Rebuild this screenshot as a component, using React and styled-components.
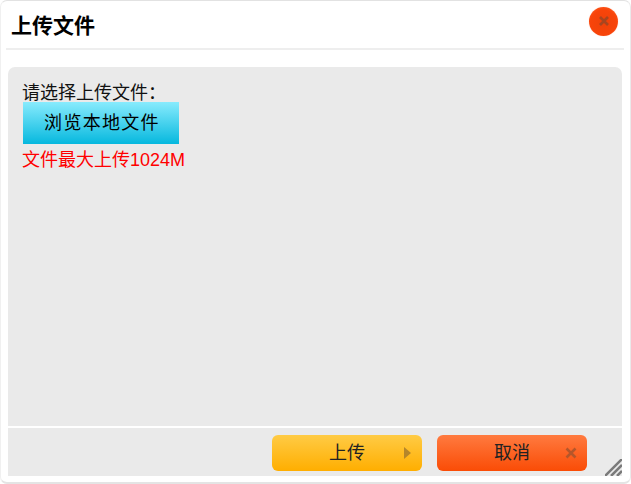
import styled, { createGlobalStyle } from 'styled-components';

const GlobalStyle = createGlobalStyle`
  html, body {
    margin: 0;
    padding: 0;
    background: #fff;
    overflow: hidden;
  }
  body {
    font-family: "Liberation Sans", "Noto Sans CJK SC", sans-serif;
  }
`;

const Dialog = styled.div`
  position: relative;
  box-sizing: border-box;
  width: 631px;
  height: 484px;
  padding: 0 8px 6px 7px;
  display: flex;
  flex-direction: column;
  background: #fff;
  border-top: 1px solid #e2e2e2;
  border-bottom: 2px solid #e4e4e4;
  border-right: 1px solid #eaeaea;
  border-left: 1px solid #f0f0f0;
  border-radius: 7px;
`;

const Header = styled.div`
  height: 47px;
  margin: 0 -2px;
  padding: 0 6px 0 5px;
  flex: none;
  display: flex;
  align-items: center;
  justify-content: space-between;
  border-bottom: 2px solid #eeeeee;
`;

const Title = styled.h1`
  margin: 3px 0 0;
  font-size: 21px;
  line-height: 24px;
  font-weight: bold;
  color: #000;
`;

const Close = styled.button`
  width: 29px;
  height: 29px;
  margin: -7px 0 0 0;
  padding: 0;
  border: none;
  border-radius: 50%;
  background: radial-gradient(circle at 50% 55%, #ee420a 0%, #f8440a 60%, #ff5a1e 85%, #ff8a5a 100%);
  box-shadow: 0 0 1px rgba(255, 90, 30, 0.4);
  display: flex;
  align-items: center;
  justify-content: center;
`;

const Panel = styled.div`
  flex: 1;
  margin-top: 17px;
  display: flex;
  flex-direction: column;
  background: #eaeaea;
  border-radius: 7px 7px 0 0;
`;

const Body = styled.div`
  flex: 1;
  padding: 14px 15px 0;
  font-size: 18px;
  line-height: 21px;
  color: #111;
`;

const Label = styled.div`
  height: 21px;
  margin-left: -1px;
  line-height: 25px;
`;

const Browse = styled.button`
  display: block;
  width: 156px;
  height: 42px;
  padding: 0 0 0 2px;
  border: none;
  background: linear-gradient(#88ebfd, #06b8de);
  color: #000;
  font: 18px/42px "Liberation Sans", "Noto Sans CJK SC", sans-serif;
  letter-spacing: 1.3px;
  text-align: center;
`;

const Limit = styled.div`
  margin: 6px 0 0 -1px;
  color: #ff0000;
`;

const Footer = styled.div`
  flex: none;
  height: 50px;
  box-sizing: border-box;
  padding: 7px 35px 0 0;
  display: flex;
  justify-content: flex-end;
  gap: 15px;
  border-top: 2px solid #fff;
`;

const Action = styled.button`
  box-sizing: border-box;
  width: 150px;
  height: 36px;
  padding: 0 10px;
  border: none;
  border-radius: 6px;
  background: ${p => p.$bg};
  color: #222;
  font: 18px/36px "Liberation Sans", "Noto Sans CJK SC", sans-serif;
  display: grid;
  grid-template-columns: 1fr auto 1fr;
  align-items: center;
  text-align: center;

  svg {
    grid-column: 3;
    justify-self: end;
  }

  span {
    grid-column: 2;
  }
`;

const Grip = styled.svg`
  position: absolute;
  right: 8px;
  bottom: 6px;
`;

export default function App() {
  return (
    <>
      <GlobalStyle />
      <Dialog>
        <Header>
          <Title>上传文件</Title>
          <Close aria-label="关闭">
            <svg width="12" height="12" viewBox="0 0 12 12">
              <path d="M2 2 L10 10 M10 2 L2 10" stroke="#a8451f" strokeWidth="2.6" />
            </svg>
          </Close>
        </Header>
        <Panel>
          <Body>
            <Label>请选择上传文件：</Label>
            <Browse>浏览本地文件</Browse>
            <Limit>文件最大上传1024M</Limit>
          </Body>
          <Footer>
            <Action $bg="linear-gradient(#ffcb45, #ffae00)">
              <span>上传</span>
              <svg width="9" height="12" viewBox="0 0 9 12">
                <path d="M1 0 L8 6 L1 12 Z" fill="#b5862a" />
              </svg>
            </Action>
            <Action $bg="linear-gradient(#ff7a3f, #fa4c06)">
              <span>取消</span>
              <svg width="12" height="12" viewBox="0 0 12 12">
                <path d="M1.5 1.5 L10.5 10.5 M10.5 1.5 L1.5 10.5" stroke="#b5562a" strokeWidth="2.6" />
              </svg>
            </Action>
          </Footer>
        </Panel>
        <Grip width="17" height="17" viewBox="0 0 17 17">
          <path d="M0 17 L17 0 M6 17 L17 6 M12 17 L17 12" stroke="#7a7a7a" strokeWidth="2.5" />
        </Grip>
      </Dialog>
    </>
  );
}
